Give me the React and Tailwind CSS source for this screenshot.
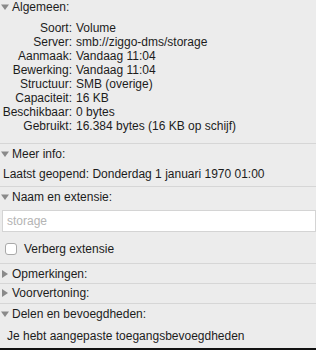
import React from "react";

const Tri = ({ open }) => (
  <svg width="8" height="8" viewBox="0 0 8 8" className="shrink-0">
    {open ? <path d="M0 1.5 L8 1.5 L4 7 Z" fill="#8a8a8a" /> : <path d="M1 0 L7 4 L1 8 Z" fill="#8a8a8a" />}
  </svg>
);

const Header = ({ label, open = true, className = "h-[20px]" }) => (
  <div className={`flex items-center gap-[3px] pl-[1px] ${className}`}>
    <Tri open={open} />
    <span>{label}</span>
  </div>
);

const rows = [
  ["Soort:", "Volume"],
  ["Server:", "smb://ziggo-dms/storage"],
  ["Aanmaak:", "Vandaag 11:04"],
  ["Bewerking:", "Vandaag 11:04"],
  ["Structuur:", "SMB (overige)"],
  ["Capaciteit:", "16 KB"],
  ["Beschikbaar:", "0 bytes"],
  ["Gebruikt:", "16.384 bytes (16 KB op schijf)"],
];

export default function App() {
  return (
    <div className="w-[316px] h-[350px] overflow-hidden bg-[#ececec] text-[#1c1c1c] text-[12px] leading-[14px] font-['Liberation_Sans',Arial,sans-serif] flex flex-col">
      <Header label="Algemeen:" className="h-[15px]" />
      <div className="pt-[6px] pb-[10px] border-b border-[#d6d6d6]">
        {rows.map(([k, v]) => (
          <div key={k} className="flex h-[14px] items-center">
            <span className="w-[72px] text-right whitespace-nowrap">{k}</span>
            <span className="pl-[4px] whitespace-nowrap">{v}</span>
          </div>
        ))}
      </div>
      <Header label="Meer info:" />
      <div className="h-[24px] pl-[3px] pt-[4px] border-b border-[#d6d6d6] whitespace-nowrap">Laatst geopend: Donderdag 1 januari 1970 01:00</div>
      <Header label="Naam en extensie:" />
      <div className="pl-[2px] pt-[3px]">
        <div className="h-[22px] bg-white border border-[#d4d4d4] flex items-center pl-[4px] text-[#b4b4b4]">storage</div>
      </div>
      <div className="h-[33px] flex items-center gap-[7px] pl-[5px] pt-[2px] border-b border-[#d6d6d6]">
        <div className="w-[12px] h-[12px] rounded-[3px] bg-white border border-[#a9a9a9]" />
        <span>Verberg extensie</span>
      </div>
      <Header label="Opmerkingen:" open={false} className="h-[20px] border-b border-[#d6d6d6]" />
      <Header label="Voorvertoning:" open={false} className="h-[20px] border-b border-[#d6d6d6]" />
      <Header label="Delen en bevoegdheden:" />
      <div className="h-[25px] pl-[7px] flex items-center">Je hebt aangepaste toegangsbevoegdheden</div>
      <div className="flex-1" />
      <div className="h-[2px] bg-[#111]" />
    </div>
  );
}
